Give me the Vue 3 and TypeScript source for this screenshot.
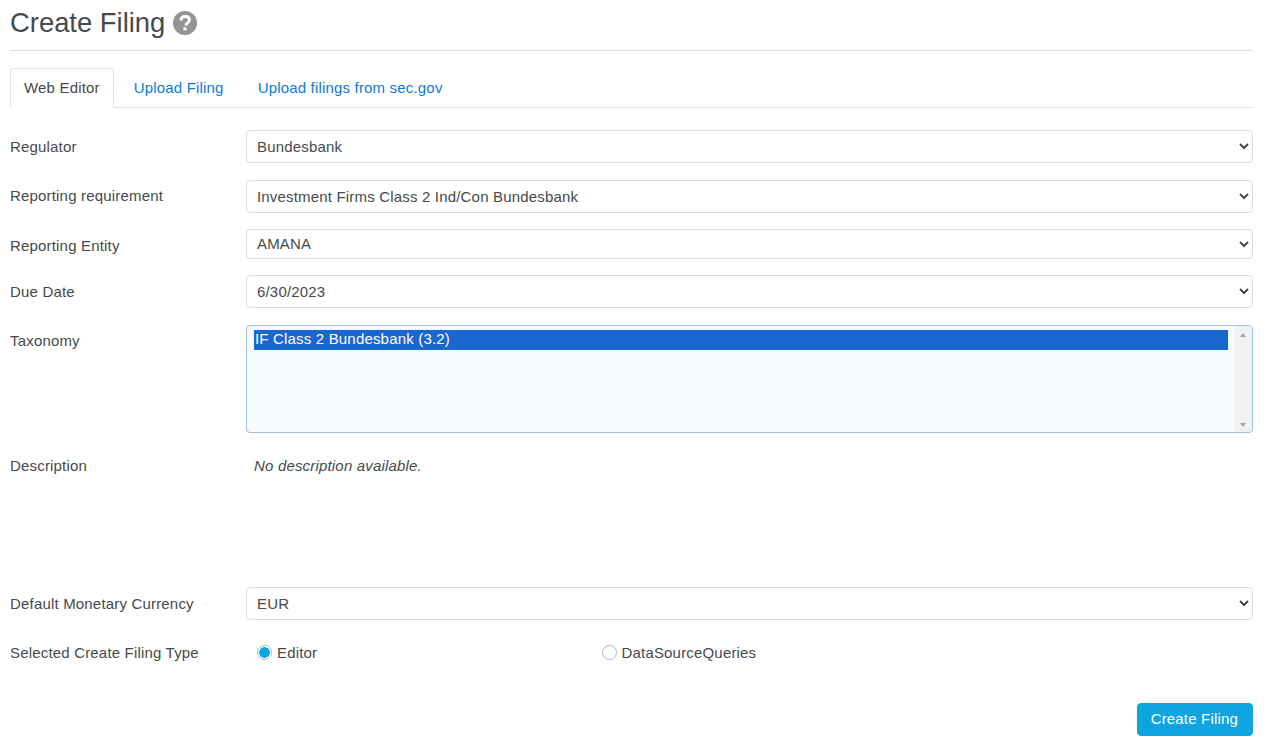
<template>
  <div class="page">
    <header class="title-bar">
      <h1>Create Filing</h1>
      <svg class="help" viewBox="0 0 24 24" aria-hidden="true">
        <circle cx="12" cy="12" r="12" fill="#939393" />
        <path d="M8 9.500c.1-2.400 1.800-3.900 4.200-3.900 2.500 0 4.200 1.400 4.200 3.400 0 1.600-.9 2.400-2 3.100-1 .6-1.300 1-1.300 1.800v.6" fill="none" stroke="#fff" stroke-width="3" />
        <rect x="10.400" y="16.400" width="3.100" height="3" fill="#fff" />
      </svg>
    </header>

    <nav class="tabs">
      <a v-for="(tab, i) in tabs" :key="tab" class="tab" :class="{ active: i === 0 }">{{ tab }}</a>
    </nav>

    <form class="form" @submit.prevent>
      <div class="row regulator">
        <label>Regulator</label>
        <select class="field"><option>Bundesbank</option></select>
      </div>
      <div class="row requirement">
        <label class="up-1">Reporting requirement</label>
        <select class="field"><option>Investment Firms Class 2 Ind/Con Bundesbank</option></select>
      </div>
      <div class="row entity">
        <label class="down-2">Reporting Entity</label>
        <select class="field short"><option>AMANA</option></select>
      </div>
      <div class="row due">
        <label>Due Date</label>
        <select class="field"><option>6/30/2023</option></select>
      </div>
      <div class="row taxonomy">
        <label>Taxonomy</label>
        <div class="listbox">
          <div class="options">
            <div class="option selected">IF Class 2 Bundesbank (3.2)</div>
          </div>
          <div class="scrollbar">
            <span class="arrow up"></span>
            <span class="arrow down"></span>
          </div>
        </div>
      </div>
      <div class="row description">
        <label>Description</label>
        <em>No description available.</em>
      </div>
      <div class="row currency">
        <label>Default Monetary Currency</label>
        <select class="field"><option>EUR</option></select>
      </div>
      <div class="row filing-type">
        <label>Selected Create Filing Type</label>
        <div class="radios">
          <label class="radio"><span class="dot on"></span>Editor</label>
          <label class="radio"><span class="dot"></span>DataSourceQueries</label>
        </div>
      </div>
      <div class="actions">
        <button type="submit">Create Filing</button>
      </div>
    </form>
  </div>
</template>

<script setup lang="ts">
const tabs: string[] = ['Web Editor', 'Upload Filing', 'Upload filings from sec.gov']
</script>

<style>
html, body {
  margin: 0;
  background: #fff;
}
</style>

<style scoped>
.page {
  box-sizing: border-box;
  width: 1271px;
  height: 749px;
  padding: 0 18px 0 10px;
  overflow: hidden;
  font-family: "Liberation Sans", Arial, sans-serif;
  font-size: 15px;
  letter-spacing: 0.18px;
  color: #464a4c;
}

.title-bar {
  display: flex;
  align-items: center;
  gap: 8px;
  height: 45px;
  padding-bottom: 5px;
  border-bottom: 1px solid #dedede;
}

h1 {
  margin: 0;
  font-size: 27.4px;
  font-weight: 400;
  letter-spacing: 0;
  color: #464a4c;
}

.help {
  width: 24px;
  height: 24px;
}

.tabs {
  display: flex;
  margin-top: 17px;
  height: 39px;
  border-bottom: 1px solid #dee2e6;
}

.tab {
  box-sizing: border-box;
  height: 40px;
  padding: 10px 13px 0;
  margin-right: 6px;
  border: 1px solid transparent;
  border-radius: 4px 4px 0 0;
  color: #0c7bdc;
  line-height: 17px;
}

.tab.active {
  color: #464a4c;
  background: #fff;
  border-color: #dee2e6 #dee2e6 #fff;
}

.form {
  display: flex;
  flex-direction: column;
}

.row {
  display: flex;
  align-items: center;
}

.row > label {
  flex: 0 0 236px;
}

.row > label.up-1 {
  margin-top: -2px;
}

.row > label.down-2 {
  margin-top: 3px;
}

.regulator {
  margin-top: 22px;
}

.requirement {
  margin-top: 17px;
}

.entity {
  margin-top: 16px;
}

.due {
  margin-top: 16px;
}

.taxonomy {
  align-items: flex-start;
  margin-top: 17px;
}

.taxonomy > label {
  padding-top: 7px;
}

.description {
  align-items: flex-start;
  margin-top: 24px;
  height: 130px;
}

.description em {
  padding-left: 8px;
}

.currency {
  margin-top: 0;
}

.filing-type {
  margin-top: 22px;
  height: 20px;
}

.field {
  flex: 1;
  min-width: 0;
  box-sizing: border-box;
  height: 33px;
  padding: 0 6px;
  border: 1px solid #dedede;
  border-radius: 4px;
  background: #fff;
  color: #464a4c;
  font: inherit;
  letter-spacing: inherit;
}

.field.short {
  height: 30px;
  padding-bottom: 2px;
}

.listbox {
  flex: 1;
  display: flex;
  box-sizing: border-box;
  height: 108px;
  border: 1px solid #9cc3d8;
  border-radius: 4px;
  background: #f5fbff;
  overflow: hidden;
}

.options {
  flex: 1;
  padding: 4px 7px 0 7px;
}

.option {
  height: 20px;
  line-height: 18px;
  padding-left: 1px;
}

.option.selected {
  background: #1b67d0;
  color: #fff;
}

.scrollbar {
  position: relative;
  flex: 0 0 17px;
  background: #f1f1f1;
}

.arrow {
  position: absolute;
  left: 5px;
  width: 0;
  height: 0;
  border-left: 3.500px solid transparent;
  border-right: 3.500px solid transparent;
}

.arrow.up {
  top: 7px;
  border-bottom: 4px solid #a3a3a3;
}

.arrow.down {
  bottom: 5px;
  border-top: 4px solid #a3a3a3;
}

.radios {
  display: flex;
  flex: 1;
}

.radio {
  display: flex;
  align-items: center;
  gap: 5px;
  width: 344.500px;
  padding-left: 11px;
  box-sizing: border-box;
  flex: none;
}

.dot {
  box-sizing: border-box;
  width: 15px;
  height: 15px;
  border: 1px solid #b5b5b5;
  border-radius: 50%;
  background: #fff;
}

.dot.on {
  background: radial-gradient(circle, #0da6e4 0 5px, #fff 5.500px);
}

.actions {
  display: flex;
  justify-content: flex-end;
  margin-top: 41px;
}

button {
  height: 33px;
  padding: 0 14px 2px 13px;
  border: 1px solid #0da4e0;
  border-radius: 4px;
  background: #0da4e0;
  color: #fff;
  font: inherit;
  letter-spacing: inherit;
}
</style>
